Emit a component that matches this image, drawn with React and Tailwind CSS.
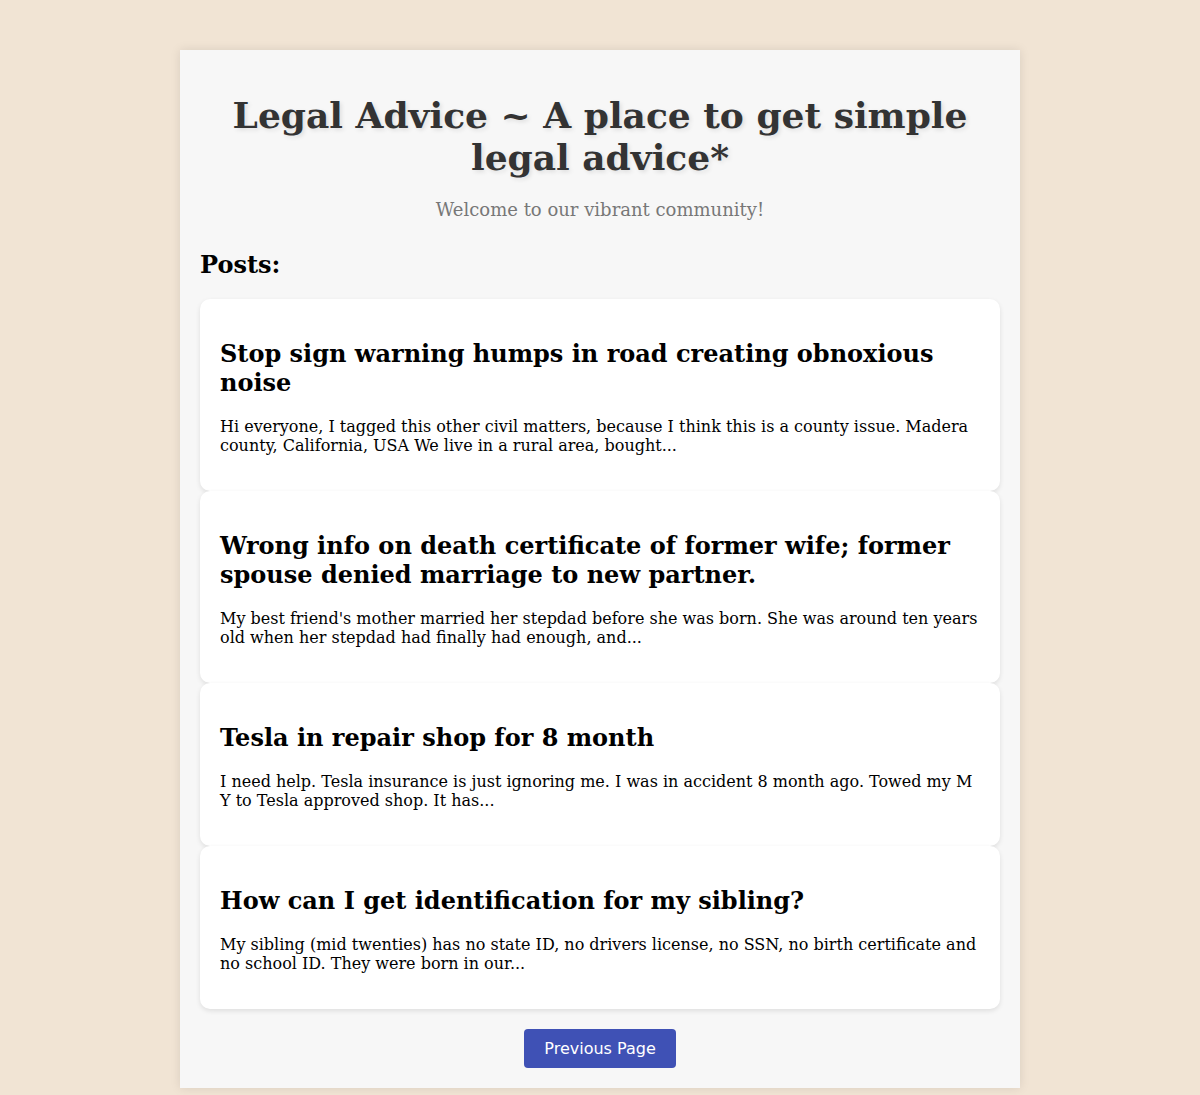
import React from 'react';

const posts = [
  {
    title: 'Stop sign warning humps in road creating obnoxious noise',
    body: 'Hi everyone, I tagged this other civil matters, because I think this is a county issue. Madera county, California, USA We live in a rural area, bought...',
  },
  {
    title: 'Wrong info on death certificate of former wife; former spouse denied marriage to new partner.',
    body: "My best friend's mother married her stepdad before she was born. She was around ten years old when her stepdad had finally had enough, and...",
  },
  {
    title: 'Tesla in repair shop for 8 month',
    body: 'I need help. Tesla insurance is just ignoring me. I was in accident 8 month ago. Towed my M Y to Tesla approved shop. It has...',
  },
  {
    title: 'How can I get identification for my sibling?',
    body: 'My sibling (mid twenties) has no state ID, no drivers license, no SSN, no birth certificate and no school ID. They were born in our...',
  },
];

function PostCard({ title, body }) {
  return (
    <div className="bg-white rounded-[10px] px-5 py-5 shadow-[0_2px_5px_rgba(0,0,0,0.1)]">
      <h3 className="mt-5 mb-5 text-[24px] font-bold leading-[normal] text-black">{title}</h3>
      <p className="mt-4 mb-4 text-[16px] leading-[normal] text-black">{body}</p>
    </div>
  );
}

export default function App() {
  return (
    <div className="min-h-screen bg-[#f1e4d4] pt-[50px] pb-2 font-['DejaVu_Serif',serif]">
      <div className="w-[840px] mx-auto bg-[#f7f7f7] p-5 shadow-[0_0_10px_rgba(0,0,0,0.1)]">
        <h1 className="mt-6 mb-[21px] text-center text-[36px] font-bold leading-[normal] text-[#333] [text-shadow:2px_2px_4px_rgba(0,0,0,0.1)]">
          Legal Advice ~ A place to get simple legal advice*
        </h1>
        <p className="mt-[18px] mb-[30px] text-center text-[18px] leading-[normal] text-[#777]">
          Welcome to our vibrant community!
        </p>
        <h2 className="mt-5 mb-5 text-[24px] font-bold leading-[normal] text-black">Posts:</h2>
        <div className="flex flex-col">
          {posts.map((p) => (
            <PostCard key={p.title} title={p.title} body={p.body} />
          ))}
        </div>
        <div className="flex justify-center mt-5">
          <button
            type="button"
            className="bg-[#3f51b5] text-white rounded-[4px] px-5 py-[10px] text-[16px] leading-[normal] font-['DejaVu_Sans',sans-serif]"
          >
            Previous Page
          </button>
        </div>
      </div>
    </div>
  );
}
